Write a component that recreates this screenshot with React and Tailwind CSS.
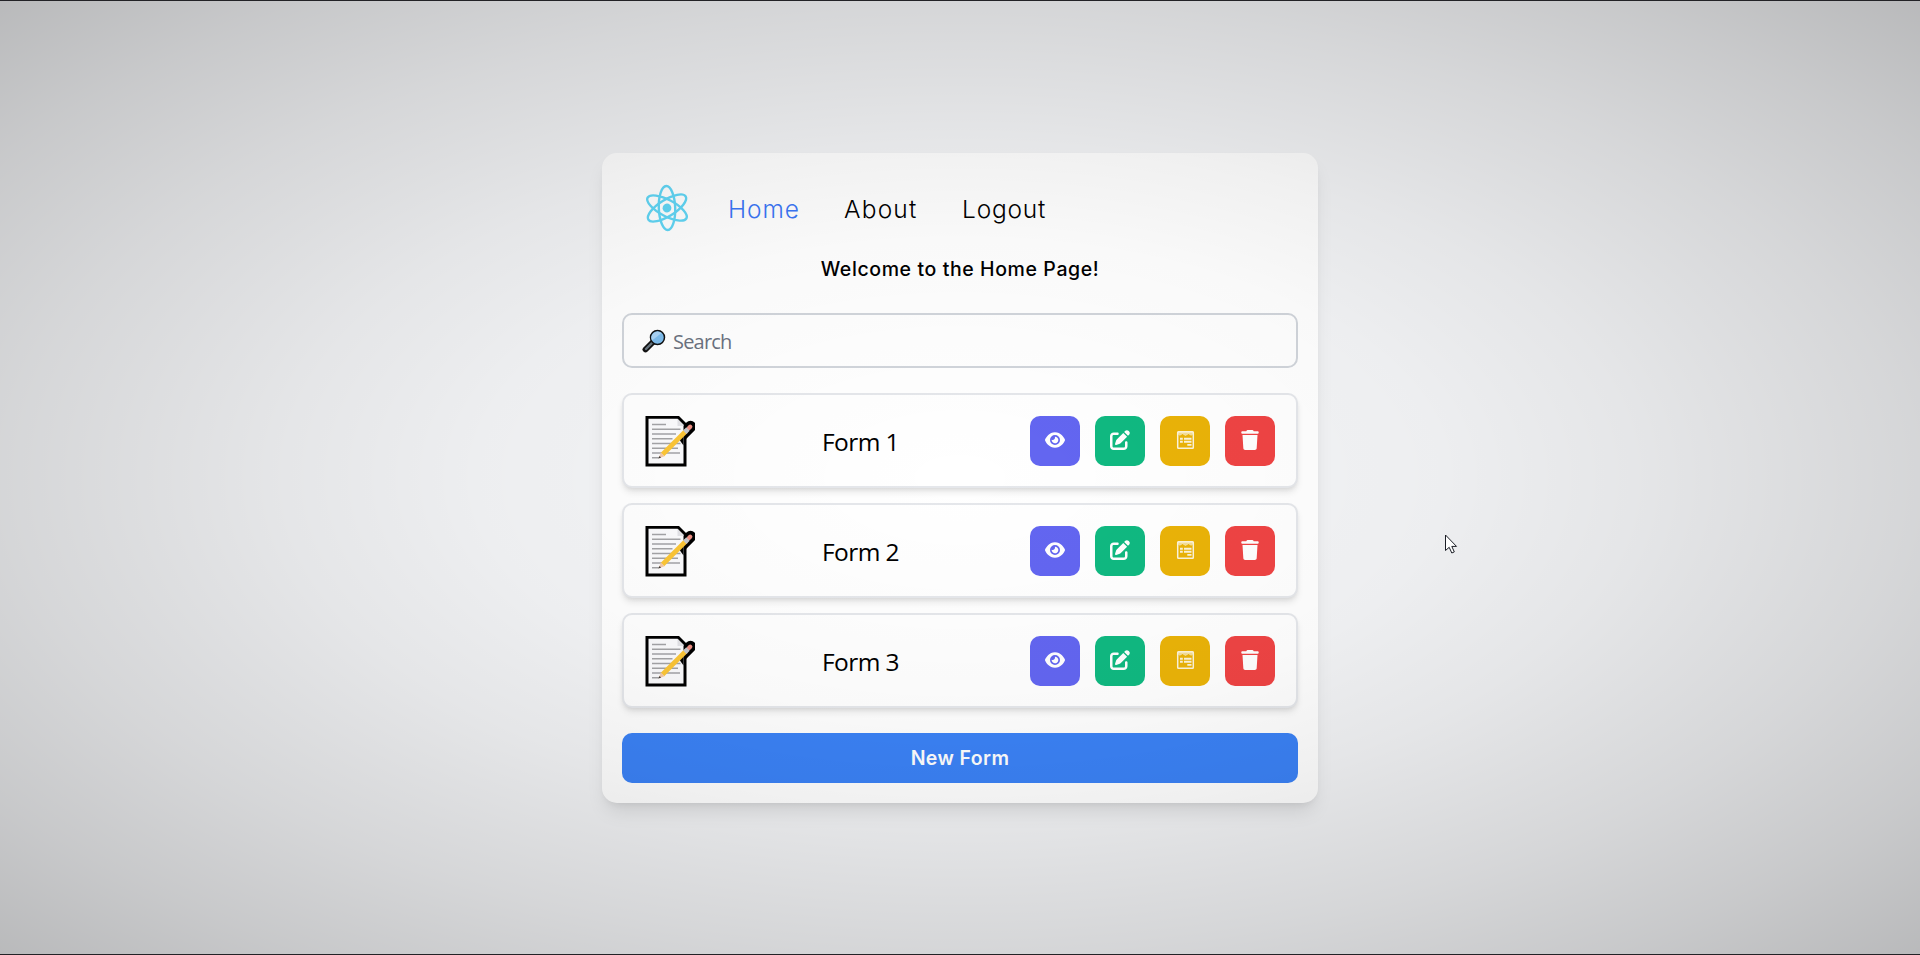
import React from "react";
import { FaEye, FaPenToSquare, FaTrash } from "react-icons/fa6";

function ReactLogo() {
  return (
    <svg width="46" height="50" viewBox="-11.5 -12.5 23 25" fill="none" stroke="#61d6f5" strokeWidth="1.2" className="shrink-0">
      <g transform="rotate(-2)">
        <circle r="2.2" fill="#61d6f5" stroke="none" />
        <ellipse rx="4.1" ry="11" />
        <ellipse rx="4.1" ry="11" transform="rotate(60)" />
        <ellipse rx="4.1" ry="11" transform="rotate(120)" />
      </g>
    </svg>
  );
}

function MemoIcon() {
  return (
    <svg width="54" height="53" viewBox="0 0.5 54 53" className="shrink-0">
      <path d="M4.500 2.500h33.500l7.500 7.500v43h-41z" fill="#000" />
      <path d="M37 25.500L49.500 13" stroke="#000" strokeWidth="11.500" strokeLinecap="round" />
      <path d="M7.500 5.300h29l6 6v38.700h-35z" fill="#fafafc" />
      <path d="M36.500 5.300l6 6v1.200h-6z" fill="#e2e2e6" />
      <path d="M11 11h14M11 15.700h28.500M11 20.500h24M11 25.200h20.500M11 30h28.500M11 34.700h26M11 39.500h28M11 44.300h7" stroke="#a3a3a6" strokeWidth="1.500" />
      <path d="M42.500 20v12l-5-7z" fill="#000" />
      <path d="M21.500 41L45 17.500" stroke="#fbc536" strokeWidth="4.800" />
      <path d="M17.500 45l2.300-6 3.700 3.700z" fill="#f3c8a8" />
      <path d="M17.500 45l1-2.500 1.600 1.500z" fill="#333" />
      <path d="M48 14.500l1.200-1.200" stroke="#ef9084" strokeWidth="4.400" strokeLinecap="round" />
      <path d="M43.800 18.700l3.200-3.200" stroke="#c7c7ca" strokeWidth="4.800" />
    </svg>
  );
}

function SearchGlyph() {
  return (
    <svg width="24" height="24" viewBox="0 0 24 24" className="mt-0.5 shrink-0">
      <path d="M3.500 20.500L11 13" stroke="#111" strokeWidth="5.800" strokeLinecap="round" />
      <path d="M4 20L10 14" stroke="#67757f" strokeWidth="2.400" strokeLinecap="round" />
      <circle cx="15.500" cy="8.500" r="7" fill="#7dbcec" stroke="#111" strokeWidth="1.500" />
      <path d="M10 11.500A6.200 6.200 0 0 1 19.500 4z" fill="#a9d3f5" />
    </svg>
  );
}

function ReceiptIcon() {
  return (
    <svg width="20" height="20" viewBox="-1 0 20 20" fill="none" stroke="#fff" className="opacity-85">
      <rect x="1.700" y="1.700" width="15.600" height="16.600" rx="0.800" strokeWidth="1.500" />
      <path d="M1.500 2h16v1.600l-2.400 1.700-2.600-1.600-3 1.800-3-1.800-2.600 1.600-2.400-1.700z" fill="#fff" fillOpacity="0.65" strokeWidth="0.500" />
      <path d="M4 8.800h2.800M8 8.800h7.500M4 11.700h2.800M8 11.700h7.500M11.300 14.900h4.200" strokeWidth="1.900" />
    </svg>
  );
}

function ActionButton({ label, className, children }) {
  return (
    <button
      aria-label={label}
      className={`flex size-[50px] items-center justify-center rounded-[10px] pb-0.5 pl-px text-[20px] text-white ${className}`}
    >
      {children}
    </button>
  );
}

function FormRow({ title }) {
  return (
    <div className="flex h-[95px] items-center justify-between rounded-[10px] border-2 border-[#e5e7eb] bg-white pr-[21px] pl-[17px] shadow-[0_5px_7px_-1px_rgba(0,0,0,0.1),0_2px_5px_-2px_rgba(0,0,0,0.1)]">
      <MemoIcon />
      <span className="-ml-1 pt-1 font-['Open_Sans','Noto_Sans',sans-serif] text-[24.5px] leading-8 tracking-[-0.6px]">{title}</span>
      <div className="flex gap-[15px] pt-px">
        <ActionButton label="View" className="bg-[#6366f1]"><FaEye /></ActionButton>
        <ActionButton label="Edit" className="bg-[#10b981]"><FaPenToSquare /></ActionButton>
        <ActionButton label="Responses" className="bg-[#eab308]"><ReceiptIcon /></ActionButton>
        <ActionButton label="Delete" className="bg-[#ef4444]"><FaTrash /></ActionButton>
      </div>
    </div>
  );
}

export default function App() {
  return (
    <div className="relative flex h-[955px] w-full items-center justify-center overflow-hidden border-y border-[#222226] bg-[#f3f4f6] font-['Inter','Open_Sans',sans-serif] text-black">
      <main className="flex h-[650px] w-[716px] flex-col rounded-[15px] bg-white p-5 shadow-[0_12px_19px_-4px_rgba(0,0,0,0.1),0_5px_8px_-5px_rgba(0,0,0,0.1)]">
        <nav className="flex h-[70px] items-center pl-[22px]">
          <ReactLogo />
          <div className="flex items-center pt-0.5 pl-[38px] text-[24.5px] leading-8 font-light">
            <a className="w-[116px] tracking-[0.9px] text-[#3b76f6]">Home</a>
            <a className="w-[118px] tracking-[1.2px]">About</a>
            <a className="tracking-[0.8px]">Logout</a>
          </div>
        </nav>
        <h1 className="flex h-[50px] items-center justify-center pt-1 text-[19.5px] font-[450] tracking-[0.6px]">Welcome to the Home Page!</h1>
        <div className="mt-5 flex h-[55px] items-center rounded-[10px] border-2 border-[#d1d5db] pl-[18px]">
          <SearchGlyph />
          <span className="pt-1 pl-[7px] font-['Open_Sans','Noto_Sans',sans-serif] text-[20px] tracking-[-0.8px] text-[#6b7280]">Search</span>
        </div>
        <div className="mt-[25px] flex flex-col gap-[15px]">
          <FormRow title="Form 1" />
          <FormRow title="Form 2" />
          <FormRow title="Form 3" />
        </div>
        <button className="mt-[25px] h-[50px] shrink-0 rounded-[10px] bg-[#3b82f6] pt-[3px] text-[19.5px] font-semibold tracking-[0.4px] text-white">New Form</button>
      </main>
      <div className="pointer-events-none absolute inset-0 bg-[radial-gradient(ellipse_at_center,transparent_0%,rgba(0,0,0,0.01)_20%,rgba(0,0,0,0.025)_35%,rgba(0,0,0,0.06)_50%,rgba(0,0,0,0.12)_70%,rgba(0,0,0,0.175)_85%,rgba(0,0,0,0.24)_100%)]" />
      <svg className="absolute top-[533px] left-[1444px]" width="14" height="22" viewBox="0 0 14 22">
        <path d="M1.500 1v15.500l3.700-3.200 2.600 5.700 2.500-1.100-2.500-5.500h4.700z" fill="#fff" stroke="#1b1e26" strokeWidth="1" />
      </svg>
    </div>
  );
}
